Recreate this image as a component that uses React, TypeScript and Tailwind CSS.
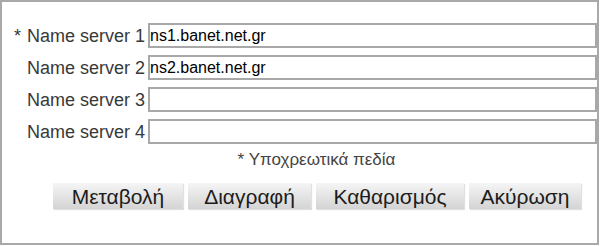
import React from 'react';

const servers = [
  { label: 'Name server 1', value: 'ns1.banet.net.gr', required: true },
  { label: 'Name server 2', value: 'ns2.banet.net.gr', required: false },
  { label: 'Name server 3', value: '', required: false },
  { label: 'Name server 4', value: '', required: false },
];

const buttons = [
  { text: 'Μεταβολή', width: 'w-[130px]' },
  { text: 'Διαγραφή', width: 'w-[123px]' },
  { text: 'Καθαρισμός', width: 'w-[148px]' },
  { text: 'Ακύρωση', width: 'w-[112px]' },
];

export default function App() {
  return (
    <div
      className="w-[599px] h-[245px] bg-white border-2 border-[#a9a9a9] flex flex-col"
      style={{ fontFamily: '"Liberation Sans", Arial, sans-serif' }}
    >
      <div className="flex flex-col gap-[7px] pt-[21px]">
        {servers.map((s) => (
          <div key={s.label} className="flex items-center">
            <label className="w-[146px] pr-[3px] text-right text-[18px] leading-none text-[#383838] whitespace-nowrap">
              {s.required && <span className="mr-[6px]">*</span>}
              {s.label}
            </label>
            <input
              type="text"
              defaultValue={s.value}
              className="h-[25px] flex-1 border-2 border-[#a8a8a8] bg-white px-0 text-[16px] text-black outline-none"
            />
          </div>
        ))}
      </div>

      <div className="mt-[4px] pl-[34px] flex justify-center">
        <span className="text-[17px] leading-[24px] text-[#444]">* Υποχρεωτικά πεδία</span>
      </div>

      <div className="mt-[11px] pl-[51px] flex gap-[5px]">
        {buttons.map((b) => (
          <button
            key={b.text}
            type="button"
            className={`${b.width} h-[26px] bg-gradient-to-b from-[#f5f5f5] to-[#d4d4d4] shadow-[1px_1px_1px_rgba(0,0,0,0.12)] text-[21px] leading-none text-[#1c1c1c]`}
          >
            {b.text}
          </button>
        ))}
      </div>
    </div>
  );
}
